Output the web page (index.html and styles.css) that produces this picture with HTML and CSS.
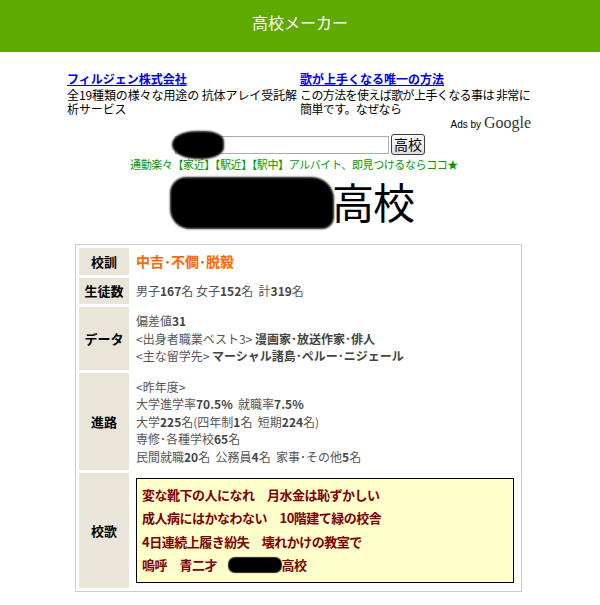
FILE: index.html
```html
<!DOCTYPE html>
<html>
  <head>
    <meta charset="utf-8">
    <title>高校メーカー</title>
    <link rel="stylesheet" href="styles.css">
  </head>
  <body>
    <header class="masthead">
      <h1 class="masthead-title">高校メーカー</h1>
    </header>

    <div class="ads">
      <div class="ads-row">
        <div class="ad">
          <a class="ad-title" href="#">フィルジェン株式会社</a>
          <p class="ad-text">全19種類の様々な用途の 抗体アレイ受託解<br>析サービス</p>
        </div>
        <div class="ad">
          <a class="ad-title" href="#">歌が上手くなる唯一の方法</a>
          <p class="ad-text ad-text-tight">この方法を使えば歌が上手くなる事は 非常に<br>簡単です。なぜなら</p>
        </div>
      </div>
      <div class="ads-by">Ads by <span class="google">Google</span></div>
    </div>

    <form class="search">
      <span class="search-field">
        <input class="search-input" type="text">
        <span class="blot blot-input"></span>
      </span>
      <button class="search-button" type="button">高校</button>
    </form>
    <p class="promo"><a href="#">通勤楽々【家近】【駅近】【駅中】アルバイト、即見つけるならココ★</a></p>

    <h2 class="school-name"><span class="blot blot-name"></span>高校</h2>

    <table class="profile">
      <tr class="row-motto">
        <th>校訓</th>
        <td><span class="motto">中吉･不僴･脱毅</span></td>
      </tr>
      <tr class="row-count">
        <th>生徒数</th>
        <td>男子<b>167</b>名 女子<b>152</b>名&nbsp; 計<b>319</b>名</td>
      </tr>
      <tr>
        <th>データ</th>
        <td>
          偏差値<b>31</b><br>
          &lt;出身者職業ベスト3&gt; <b>漫画家･放送作家･俳人</b><br>
          &lt;主な留学先&gt; <b>マーシャル諸島･ペルー･ニジェール</b>
        </td>
      </tr>
      <tr>
        <th>進路</th>
        <td>
          &lt;昨年度&gt;<br>
          大学進学率<b>70.5%</b>&nbsp; 就職率<b>7.5%</b><br>
          大学<b>225</b>名(四年制<b>1</b>名&nbsp; 短期<b>224</b>名)<br>
          専修･各種学校<b>65</b>名<br>
          民間就職<b>20</b>名&nbsp; 公務員<b>4</b>名&nbsp; 家事･その他<b>5</b>名
        </td>
      </tr>
      <tr>
        <th>校歌</th>
        <td>
          <div class="song">
            変な靴下の人になれ　月水金は恥ずかしい<br>
            成人病にはかなわない　10階建て緑の校舎<br>
            4日連続上履き紛失　壊れかけの教室で<br>
            嗚呼　青二才 <span class="blot blot-song"></span>高校
          </div>
        </td>
      </tr>
    </table>
  </body>
</html>
```

FILE: styles.css
```css
body {
  margin: 0;
  padding: 0;
  background-color: #fff;
  color: #000;
  font-family: "Noto Sans CJK JP", "DejaVu Sans", sans-serif;
}

.masthead {
  height: 52px;
  background-color: #5eaa00;
  text-align: center;
}

.masthead-title {
  margin: 0;
  padding-top: 11px;
  color: #fff;
  font-size: 16px;
  font-weight: normal;
  line-height: 22px;
}

.ads {
  width: 466px;
  margin: 20px auto 0;
  font-size: 12px;
  line-height: 14px;
}

.ads-row {
  display: flex;
}

.ad {
  width: 234px;
}

.ad-title {
  color: #0000ee;
  font-weight: bold;
  text-decoration: underline;
}

.ad-text {
  margin: 2px 0 0;
  white-space: nowrap;
  letter-spacing: -0.1px;
}

.ad-text-tight {
  letter-spacing: -0.6px;
}

.ads-by {
  margin-top: -2px;
  padding-right: 2px;
  text-align: right;
  font-family: "Liberation Sans", sans-serif;
  font-size: 10px;
  line-height: 18px;
}

.google {
  font-family: "Liberation Serif", serif;
  font-size: 16px;
  color: #333;
}

.search {
  display: flex;
  justify-content: center;
  align-items: center;
  gap: 2px;
  margin: 0;
}

.search-field {
  position: relative;
}

.search-input {
  display: block;
  width: 210px;
  height: 14px;
  margin: 0;
  padding: 1px;
  border: 1px solid #a5acb2;
}

.search-button {
  height: 21px;
  margin: 0;
  padding: 0 2px;
  border: 1px solid #3c3c3c;
  border-radius: 3px;
  background: linear-gradient(#fbfbfd, #dcdde6);
  font-family: inherit;
  font-size: 14px;
  line-height: 17px;
}

.blot {
  display: inline-block;
  background-color: #000;
  box-shadow: 0 0 2px 2px #111;
}

.blot-input {
  position: absolute;
  left: -1px;
  top: -3px;
  width: 48px;
  height: 24px;
  border-radius: 45% 35% 40% 50%;
}

.promo {
  margin: 2px 0 0;
  padding-right: 12px;
  text-align: center;
  font-size: 11px;
  line-height: 14px;
  letter-spacing: -0.4px;
}

.promo a {
  color: #009900;
  text-decoration: none;
}

.school-name {
  margin: 2px 0 0;
  padding-right: 14px;
  text-align: center;
  font-size: 42px;
  font-weight: normal;
  line-height: 56px;
  letter-spacing: -1px;
}

.blot-name {
  width: 160px;
  height: 48px;
  margin-right: 0;
  vertical-align: -8px;
  border-radius: 14px 20px 10px 18px;
}

.profile {
  width: 447px;
  margin: 15px 0 0 75px;
  border: 1px solid #cccccc;
  border-spacing: 3px;
  font-size: 12px;
  line-height: 17.5px;
  color: #555;
}

.profile th {
  width: 50px;
  padding: 0;
  background-color: #e9e6d9;
  color: #000;
  font-size: 13px;
  text-align: center;
  vertical-align: middle;
}

.profile td {
  padding: 5px 4px;
  vertical-align: middle;
}

.profile b {
  color: #444;
}

.row-motto td {
  height: 17px;
  line-height: 17px;
}

.row-count td {
  line-height: 16px;
}

.motto {
  color: #ff6600;
  font-size: 14px;
  font-weight: bold;
}

.song {
  margin: 0;
  padding: 4px 5px 6px;
  border: 1px solid #000;
  background-color: #ffffcc;
  color: #800000;
  font-size: 13px;
  font-weight: bold;
  line-height: 23.3px;
  letter-spacing: -0.5px;
}

.blot-song {
  width: 52px;
  height: 14px;
  margin-left: 10px;
  vertical-align: -2px;
  border-radius: 6px;
  box-shadow: 0 0 1px 1px #222;
}
```
